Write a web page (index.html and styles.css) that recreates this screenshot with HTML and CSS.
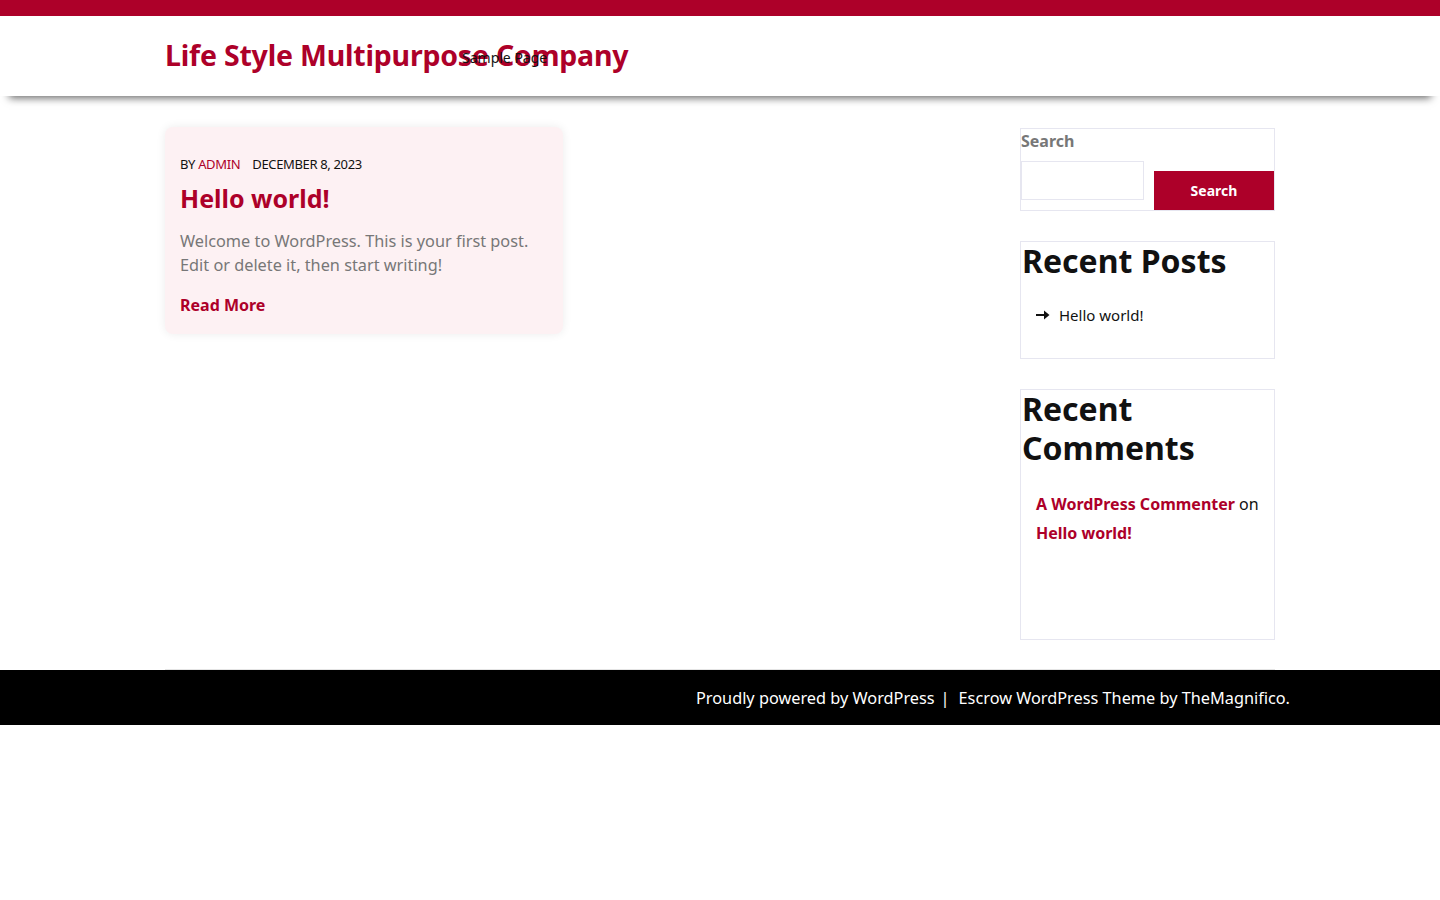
FILE: index.html
```html
<!DOCTYPE html>
<html lang="en">
<head>
<meta charset="utf-8">
<title>Life Style Multipurpose Company</title>
<link rel="stylesheet" href="styles.css">
</head>
<body>
<div class="topbar"></div>
<header class="site-header">
  <div class="container header-grid">
    <div class="brand"><a href="#" class="site-title">Life Style Multipurpose Company</a></div>
    <nav class="main-nav"><a href="#">Sample Page</a></nav>
  </div>
</header>
<div class="container page">
  <main class="content">
    <article class="post-card">
      <div class="meta"><span>BY <a href="#" class="author">ADMIN</a></span><span class="date">DECEMBER 8, 2023</span></div>
      <h2 class="post-title"><a href="#">Hello world!</a></h2>
      <p class="excerpt">Welcome to WordPress. This is your first post. Edit or delete it, then start writing!</p>
      <a href="#" class="read-more">Read More</a>
    </article>
  </main>
  <aside class="sidebar">
    <section class="widget widget-search">
      <label class="search-label">Search</label>
      <div class="search-row">
        <input type="text" class="search-input">
        <button class="search-btn">Search</button>
      </div>
    </section>
    <section class="widget widget-recent">
      <h2 class="widget-title">Recent Posts</h2>
      <ul class="recent-list">
        <li><svg class="arrow" width="14" height="10" viewBox="0 0 14 10"><rect x="0" y="4" width="9" height="2" fill="#111"/><path d="M8 0.5 L13.5 5 L8 9.5 Z" fill="#111"/></svg><a href="#">Hello world!</a></li>
      </ul>
    </section>
    <section class="widget widget-comments">
      <h2 class="widget-title">Recent Comments</h2>
      <p class="comment-line"><a href="#">A WordPress Commenter</a> on <a href="#">Hello world!</a></p>
    </section>
  </aside>
</div>
<div class="container footer-rule"></div>
<footer class="site-footer">
  <div class="container footer-inner">
    <span>Proudly powered by WordPress</span><span class="sep">|</span><span>Escrow WordPress Theme by TheMagnifico.</span>
  </div>
</footer>
</body>
</html>
```

FILE: styles.css
```css
* { box-sizing: border-box; }
body {
  margin: 0;
  font-family: "Noto Sans", "Open Sans", sans-serif;
  color: #111;
  background: #fff;
}
a { text-decoration: none; color: inherit; }
.container {
  width: 1110px;
  margin: 0 auto;
}
.topbar {
  height: 16px;
  background: #ad0029;
}
.site-header {
  height: 80px;
  background: #fff;
  box-shadow: 0 11px 8px -9px rgba(0,0,0,0.6);
  position: relative;
  z-index: 1;
}
.header-grid {
  height: 80px;
  display: grid;
  grid-template-columns: 297px 1fr;
  align-items: center;
}
.brand { padding-bottom: 3px; }
.site-title {
  font-size: 28.5px;
  font-weight: 700;
  color: #ad0029;
  white-space: nowrap;
  line-height: 40px;
  letter-spacing: -0.2px;
}
.main-nav {
  font-size: 14px;
  color: #111;
  padding-top: 2px;
}
.page {
  display: grid;
  grid-template-columns: 1fr 255px;
  align-items: start;
  padding-top: 31px;
  padding-bottom: 29px;
}
.post-card {
  width: 398px;
  background: #fdf1f3;
  border-radius: 8px;
  box-shadow: 0 0 10px rgba(0,0,0,0.08);
  padding: 27px 15px 17px;
}
.meta {
  font-size: 13px;
  line-height: 20px;
  letter-spacing: -0.35px;
  display: flex;
  gap: 12px;
}
.author { color: #ad0029; }
.post-title {
  margin: 6px 0 0;
  font-size: 25px;
  line-height: 36px;
  font-weight: 700;
  color: #ad0029;
}
.excerpt {
  margin: 13px 0 0;
  font-size: 16.3px;
  line-height: 24px;
  color: #777;
}
.read-more {
  display: block;
  margin-top: 16px;
  font-size: 16px;
  font-weight: 700;
  line-height: 24px;
  color: #ad0029;
}
.sidebar {
  padding-top: 1px;
  display: flex;
  flex-direction: column;
  gap: 30px;
}
.widget {
  border: 1px solid #e6e6f0;
}
.search-label {
  display: block;
  font-size: 16px;
  font-weight: 700;
  color: #777;
  line-height: 24px;
}
.search-row {
  display: flex;
  align-items: flex-start;
  gap: 10px;
  margin-top: 8px;
}
.search-input {
  width: 123px;
  height: 39px;
  border: 1px solid #e6e6f0;
  margin: 0;
  padding: 0 8px;
  background: #fff;
}
.search-btn {
  margin-top: 10px;
  width: 120px;
  height: 39px;
  border: 0;
  background: #ad0029;
  color: #fff;
  font-family: "Noto Sans", sans-serif;
  font-weight: 700;
  font-size: 14px;
}
.widget-title {
  margin: 0;
  font-size: 32px;
  line-height: 39px;
  font-weight: 700;
  color: #111;
  padding-left: 1px;
  position: relative;
  top: -1px;
}
.widget-recent {
  padding-bottom: 31px;
}
.recent-list {
  list-style: none;
  margin: 22px 0 0;
  padding: 0 15px;
}
.recent-list li {
  display: flex;
  align-items: center;
  gap: 9px;
  font-size: 15px;
  line-height: 24px;
}
.widget-comments {
  padding-bottom: 91px;
}
.comment-line {
  margin: 22px 0 0;
  padding: 0 15px;
  font-size: 16px;
  line-height: 29px;
}
.comment-line a {
  color: #ad0029;
  font-weight: 700;
}
.footer-rule {
  height: 1px;
  background: #e4e4e4;
}
.site-footer {
  background: #000;
  height: 55px;
}
.footer-inner {
  width: 1140px;
  height: 55px;
  display: flex;
  justify-content: flex-end;
  align-items: center;
  color: #fff;
  font-size: 16.3px;
}
.sep { margin: 0 9px 0 6px; }
```
